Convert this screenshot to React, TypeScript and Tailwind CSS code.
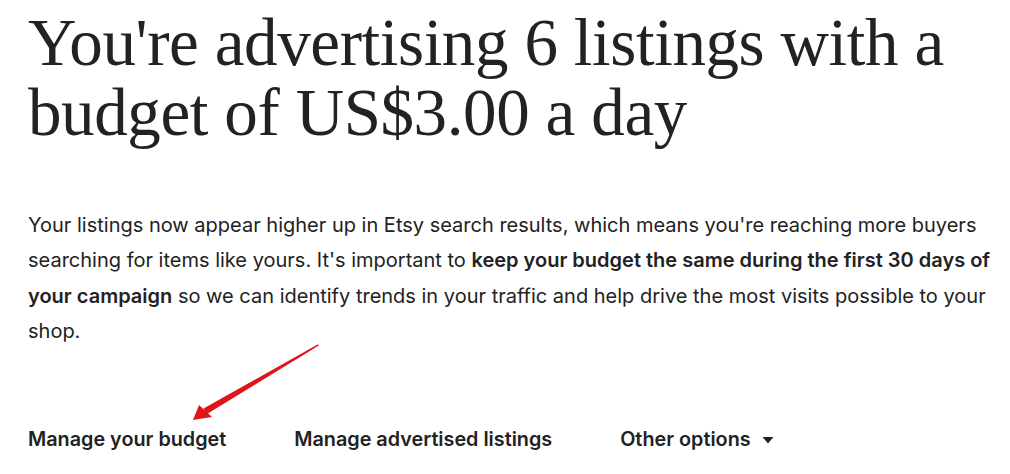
export default function App() {
  return (
    <div className="w-[1010px] h-[474px] bg-white overflow-hidden relative text-[#222222]">
      <div className="pl-[28px] pt-[7px]">
        <h1 className="text-[67px] leading-[70px] font-light tracking-[-0.4px]" style={{ fontFamily: '"Liberation Serif", serif' }}>
          You're advertising 6 listings with a<br />budget of US$3.00 a day
        </h1>
        <p className="mt-[61px] text-[20px] leading-[35.3px]" style={{ fontFamily: 'Inter, "Noto Sans", sans-serif' }}>
          Your listings now appear higher up in Etsy search results, which means you're reaching more buyers<br />
          searching for items like yours. It's important to <b className="font-semibold">keep your budget the same during the first 30 days of</b><br />
          <b className="font-semibold">your campaign</b> so we can identify trends in your traffic and help drive the most visits possible to your<br />
          shop.
        </p>
        <div className="mt-[76px] flex items-center gap-[68px] text-[19.8px] font-semibold" style={{ fontFamily: 'Inter, "Noto Sans", sans-serif' }}>
          <span>Manage your budget</span>
          <span>Manage advertised listings</span>
          <span className="flex items-center gap-[11px]">Other options
            <svg width="12" height="8" viewBox="0 0 12 8"><path d="M0.5 1h11L6 7.5z" fill="#222" /></svg>
          </span>
        </div>
      </div>
      <svg className="absolute left-0 top-0" width="1010" height="474" viewBox="0 0 1010 474">
        <path d="M318 344.2 L318.8 345.6 L207 414 L203.5 408.5 Z" fill="#e0141b" />
        <path d="M193 420 L199 405 L212 417 Z" fill="#e0141b" />
      </svg>
    </div>
  );
}
